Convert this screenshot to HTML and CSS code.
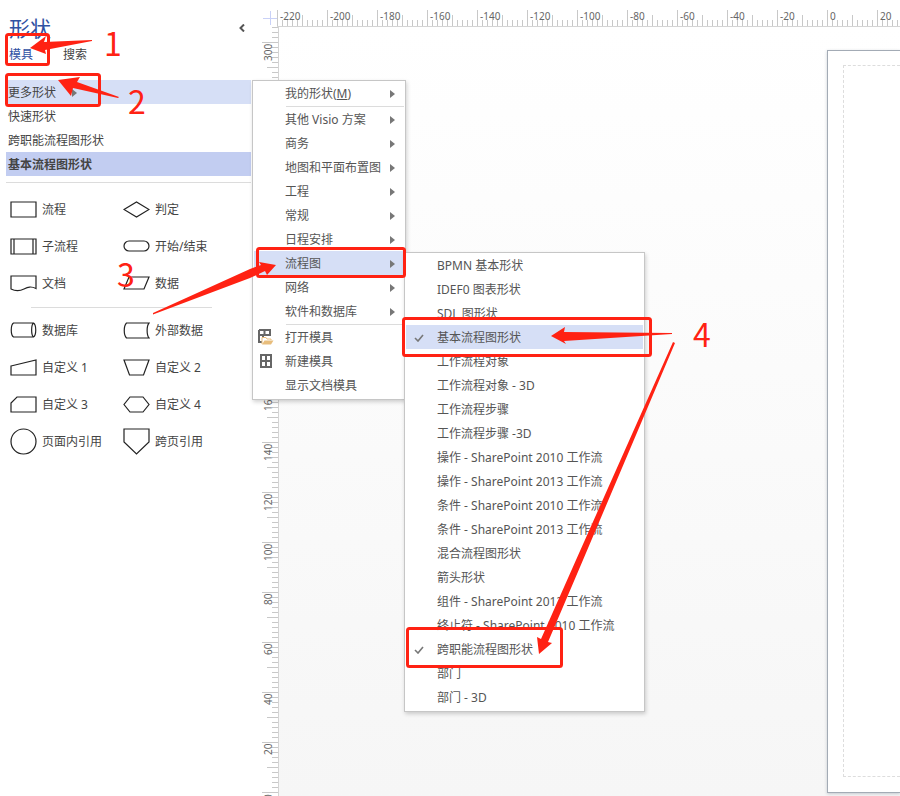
FILE: index.html
```html
<!DOCTYPE html>
<html lang="zh-CN">
<head>
    <meta charset="UTF-8">
    <title>形状</title>
    <link rel="stylesheet" href="styles.css">
</head>
<body>
    <!-- 形状面板 -->
    <aside class="panel">
        <header class="panel-head">
            <h1>形状</h1>
            <button class="collapse" type="button" aria-label="折叠">
                <svg width="6" height="8" viewBox="0 0 6 8"><path d="M5 0.5L1.5 4L5 7.5" fill="none" stroke="#555" stroke-width="2"/></svg>
            </button>
        </header>
        <nav class="tabs">
            <a class="active" href="#stencils">模具</a>
            <a href="#search">搜索</a>
        </nav>
        <ul class="stencils" id="stencils">
            <li class="more">
                <button type="button">更多形状<i class="arrow"></i></button>
                <!-- 一级菜单 -->
                <ul class="menu">
                    <li><button type="button"><span>我的形状(<u>M</u>)</span><i class="arrow"></i></button></li>
                    <li class="line"></li>
                    <li><button type="button">其他 Visio 方案<i class="arrow"></i></button></li>
                    <li><button type="button">商务<i class="arrow"></i></button></li>
                    <li><button type="button">地图和平面布置图<i class="arrow"></i></button></li>
                    <li><button type="button">工程<i class="arrow"></i></button></li>
                    <li><button type="button">常规<i class="arrow"></i></button></li>
                    <li><button type="button">日程安排<i class="arrow"></i></button></li>
                    <li class="on">
                        <button type="button">流程图<i class="arrow"></i></button>
                        <!-- 二级菜单 -->
                        <ul class="menu submenu">
                            <li><button type="button">BPMN 基本形状</button></li>
                            <li><button type="button">IDEF0 图表形状</button></li>
                            <li><button type="button">SDL 图形状</button></li>
                            <li class="on"><button type="button"><svg class="check" width="10" height="8" viewBox="0 0 10 8"><path d="M1 4L4 7L9 1" fill="none" stroke="#777" stroke-width="1.6"/></svg>基本流程图形状</button></li>
                            <li><button type="button">工作流程对象</button></li>
                            <li><button type="button">工作流程对象 - 3D</button></li>
                            <li><button type="button">工作流程步骤</button></li>
                            <li><button type="button">工作流程步骤 -3D</button></li>
                            <li><button type="button">操作 - SharePoint 2010 工作流</button></li>
                            <li><button type="button">操作 - SharePoint 2013 工作流</button></li>
                            <li><button type="button">条件 - SharePoint 2010 工作流</button></li>
                            <li><button type="button">条件 - SharePoint 2013 工作流</button></li>
                            <li><button type="button">混合流程图形状</button></li>
                            <li><button type="button">箭头形状</button></li>
                            <li><button type="button">组件 - SharePoint 2013 工作流</button></li>
                            <li><button type="button">终止符 - SharePoint 2010 工作流</button></li>
                            <li><button type="button"><svg class="check" width="10" height="8" viewBox="0 0 10 8"><path d="M1 4L4 7L9 1" fill="none" stroke="#777" stroke-width="1.6"/></svg>跨职能流程图形状</button></li>
                            <li><button type="button">部门</button></li>
                            <li><button type="button">部门 - 3D</button></li>
                        </ul>
                    </li>
                    <li><button type="button">网络<i class="arrow"></i></button></li>
                    <li><button type="button">软件和数据库<i class="arrow"></i></button></li>
                    <li class="line"></li>
                    <li><button type="button">
                        <svg class="icon" width="16" height="16" viewBox="0 0 16 16">
                            <path d="M1 1H12V7M1 1V13H4M1 6H12M6.5 1V6M5 6V9" fill="none" stroke="#666" stroke-width="2"/>
                            <path d="M4 15V8.500H8L9 10H13V11" fill="#fff" stroke="#e8bd7c"/>
                            <path d="M4 15.500L6.500 11.500H15.500L13 15.500Z" fill="#e8bd7c"/>
                        </svg>打开模具</button></li>
                    <li><button type="button">
                        <svg class="icon" width="16" height="16" viewBox="0 0 16 16"><path d="M3 2H13V14H3ZM8 2V14M3 8H13" fill="none" stroke="#666" stroke-width="2"/></svg>新建模具</button></li>
                    <li><button type="button">显示文档模具</button></li>
                </ul>
            </li>
            <li><button type="button">快速形状</button></li>
            <li><button type="button">跨职能流程图形状</button></li>
            <li class="current"><button type="button">基本流程图形状</button></li>
        </ul>
        <!-- 形状列表 -->
        <div class="shapes">
            <div class="shape"><svg viewBox="0 0 27 27"><path d="M1 6H26V21H1Z"/></svg>流程</div>
            <div class="shape"><svg viewBox="0 0 27 27"><path d="M1 13.500L13.500 6L26 13.500L13.500 21Z"/></svg>判定</div>
            <div class="shape"><svg viewBox="0 0 27 27"><path d="M1 6H26V21H1ZM4 6V21M23 6V21"/></svg>子流程</div>
            <div class="shape"><svg viewBox="0 0 27 27"><rect x="1" y="8" width="25" height="10" rx="5"/></svg>开始/结束</div>
            <div class="shape"><svg viewBox="0 0 27 27"><path d="M1 6H26V18.500C21 16 18 17 14 19C9 21.500 5 21 1 19Z"/></svg>文档</div>
            <div class="shape"><svg viewBox="0 0 27 27"><path d="M6 7H26L21 19H1Z"/></svg>数据</div>
        </div>
        <hr>
        <div class="shapes">
            <div class="shape"><svg viewBox="0 0 27 27"><path d="M3.500 6H23.500C26.500 8 26.500 18 23.500 20H3.500C.5 18 .5 8 3.500 6ZM23.500 6C21 8 21 18 23.500 20"/></svg>数据库</div>
            <div class="shape"><svg viewBox="0 0 27 27"><path d="M3.500 6H26C23.500 9 23.500 18 26 21H3.500C.5 18 .5 9 3.500 6Z"/></svg>外部数据</div>
            <div class="shape"><svg viewBox="0 0 27 27"><path d="M1 12L26 6V21H1Z"/></svg>自定义 1</div>
            <div class="shape"><svg viewBox="0 0 27 27"><path d="M1 6H26L20.500 21H6.500Z"/></svg>自定义 2</div>
            <div class="shape"><svg viewBox="0 0 27 27"><path d="M7 6H26V21H1V12Z"/></svg>自定义 3</div>
            <div class="shape"><svg viewBox="0 0 27 27"><path d="M7 6H20L26 13.500L20 21H7L1 13.500Z"/></svg>自定义 4</div>
            <div class="shape"><svg viewBox="0 0 27 27"><circle cx="13.500" cy="13.500" r="12.500"/></svg>页面内引用</div>
            <div class="shape"><svg viewBox="0 0 27 27"><path d="M1 1H26V14L13.500 26L1 14Z"/></svg>跨页引用</div>
        </div>
    </aside>

    <!-- 绘图区 -->
    <main class="workspace">
        <div class="corner"></div>
        <div class="ruler-x">
            <span>-220</span><span>-200</span><span>-180</span><span>-160</span><span>-140</span><span>-120</span><span>-100</span><span>-80</span><span>-60</span><span>-40</span><span>-20</span><span>0</span><span>20</span>
        </div>
        <div class="ruler-y">
            <span class="part"></span><span>300</span><span>280</span><span>260</span><span>240</span><span>220</span><span>200</span><span>180</span><span>160</span><span>140</span><span>120</span><span>100</span><span>80</span><span>60</span><span>40</span><span>20</span><span>0</span>
        </div>
        <div class="canvas">
            <div class="page"><div class="margins"></div></div>
        </div>
    </main>

    <!-- 步骤标注 -->
    <svg class="notes" width="900" height="796" viewBox="0 0 900 796">
        <g class="frames">
            <rect x="6.500" y="34.500" width="42" height="30" rx="2"/>
            <rect x="6.500" y="74.500" width="93" height="31" rx="2"/>
            <rect x="257.500" y="248.500" width="147" height="28" rx="2"/>
            <rect x="403.500" y="318.500" width="247" height="37" rx="2"/>
            <rect x="407.500" y="628.500" width="154" height="38" rx="2"/>
        </g>
        <g class="pointers">
            <path d="M30 48L46 36L44 42L92 40V41L45 50L46 54Z"/>
            <path d="M58 80L80 77L77 82L119 97L118 98L73 88L71 96Z"/>
            <path d="M276 265L259 262L261 265L250 269L153 313V314.500L250 278L265 271L267 275Z"/>
            <path d="M551 336L565 327L564 332L672 333V334L564 341L566 344Z"/>
            <path d="M539 654L537 637L541 639L576 560L673 342L675 343L583 560L548 642L552 643Z"/>
        </g>
        <text x="104" y="56">1</text>
        <text x="128" y="114">2</text>
        <text x="117" y="287">3</text>
        <text x="693" y="347">4</text>
    </svg>
</body>
</html>
```
FILE: styles.css
```css
*{box-sizing: border-box;}
body,h1,ul{margin: 0;padding: 0;}
ul{list-style: none;}
body{
    display: flex;height: 100vh;overflow: hidden;position: relative;
    background: #fff;color: #444;
    font: 12px/24px "Noto Sans", "Noto Sans CJK SC", sans-serif;
}
button{
    border: 0;padding: 0;background: none;
    font: inherit;color: inherit;text-align: left;
}

/* 左侧面板 */
.panel{width: 262px;flex: none;padding: 14px 11px 0 6px;}
.panel-head{
    display: flex;justify-content: space-between;align-items: center;
    height: 28px;padding: 0 6px 0 3px;
}
.panel-head h1{font-size: 21px;font-weight: 400;line-height: 28px;color: #2f51a3;}
.collapse{display: flex;}
.tabs{display: flex;gap: 30px;height: 38px;padding: 1px 0 0 3px;}
.tabs a{color: #444;text-decoration: none;}
.tabs .active{color: #2f51a3;}
.stencils{padding-bottom: 6px;border-bottom: 1px solid #dcdcdc;}
.stencils button{display: flex;align-items: center;width: 100%;height: 24px;padding: 2px 0 0 2px;white-space: nowrap;}
.more{position: relative;background: #d6dff6;}
.more>button{gap: 16px;}
.current{background: #c2cdf1;font-weight: 700;}
.arrow{border: 4px solid transparent;border-left: 5px solid #777;border-right: 0;}

/* 形状 */
.shapes{display: grid;grid-template-columns: 113px 1fr;grid-auto-rows: 37px;padding-left: 4px;}
.stencils+.shapes{padding-top: 8px;}
.shape{display: flex;align-items: center;gap: 5px;}
.shape svg{width: 27px;height: 27px;fill: none;stroke: #222;stroke-width: 1.2;}
.panel hr{height: 1px;border: 0;margin: 5px 39px 4px 25px;background: #dcdcdc;}

/* 菜单 */
.menu{
    position: absolute;top: 0;left: 246px;z-index: 2;
    width: 154px;padding: 0 1px 2px;
    background: #fff;border: 1px solid #c6c6c6;
    box-shadow: 1px 2px 4px rgba(0,0,0,.18);
}
.menu li{position: relative;}
.menu button{justify-content: space-between;padding: 2px 9px 0 31px;color: #555;}
.menu .on{background: #d6dff6;}
.menu .line{height: 2px;margin-left: 32px;border-bottom: 1px solid #dcdcdc;}
.menu .icon{position: absolute;left: 4px;top: 4px;}
.submenu{top: 1px;left: 150px;width: 241px;}
.submenu .check{position: absolute;left: 8px;top: 9px;}

/* 标尺 */
.workspace{
    flex: 1;min-width: 0;display: grid;
    grid-template-columns: 17px 1fr;grid-template-rows: 17px 1fr;
    padding-top: 10px;
}
.corner{
    background: linear-gradient(#c9d1f7,#c9d1f7) 8px 1px/1px 14px no-repeat,
        linear-gradient(#c9d1f7,#c9d1f7) 1px 8px/14px 1px no-repeat;
}
.ruler-x,.ruler-y{display: flex;overflow: hidden;font-size: 10px;line-height: 13px;color: #666;}
.ruler-x{border-bottom: 1px solid #d4d4d4;margin-left: -2px;}
.ruler-x span{
    flex: none;width: 50px;height: 16px;padding-left: 3px;
    background: linear-gradient(#c8c8c8,#c8c8c8) 0 0/1px 16px no-repeat,
        linear-gradient(#c8c8c8,#c8c8c8) 25px 5px/1px 11px no-repeat,
        repeating-linear-gradient(90deg,#c8c8c8 0 1px,transparent 1px 5px) 0 10px/50px 6px no-repeat;
}
.ruler-y{flex-direction: column;border-right: 1px solid #d4d4d4;min-height: 0;}
.ruler-y span{
    flex: none;width: 16px;height: 50px;padding-bottom: 2px;
    writing-mode: vertical-rl;transform: rotate(180deg);text-align: right;
    background: linear-gradient(#c8c8c8,#c8c8c8) 0 100%/16px 1px no-repeat,
        linear-gradient(#c8c8c8,#c8c8c8) 0 24px/11px 1px no-repeat,
        repeating-linear-gradient(0deg,#c8c8c8 0 1px,transparent 1px 5px) 0 100%/6px 50px no-repeat;
}
.ruler-y .part{
    height: 15px;
    background: repeating-linear-gradient(0deg,#c8c8c8 0 1px,transparent 1px 5px) 0 100%/6px 15px no-repeat;
}

/* 画布 */
.canvas{
    display: flex;min-width: 0;min-height: 0;overflow: hidden;
    padding: 23px 0 3px 548px;
    background: linear-gradient(#fff,#f6f6f6);
}
.page{
    flex: 1;display: flex;padding: 14px 0 15px 15px;
    background: #fff;border: 1px solid #a3abb5;border-right: 0;
    box-shadow: 0 1px 3px rgba(80,100,120,.3);
}
.margins{flex: 1;border: 1px dashed #ddd;border-right: 0;}

/* 红色标注 */
.notes{position: absolute;top: 0;left: 0;z-index: 5;pointer-events: none;fill: #ff2213;}
.frames{fill: none;stroke: #ff2213;stroke-width: 3;}
.notes text{font: 32px "Noto Sans CJK SC", sans-serif;}
```
